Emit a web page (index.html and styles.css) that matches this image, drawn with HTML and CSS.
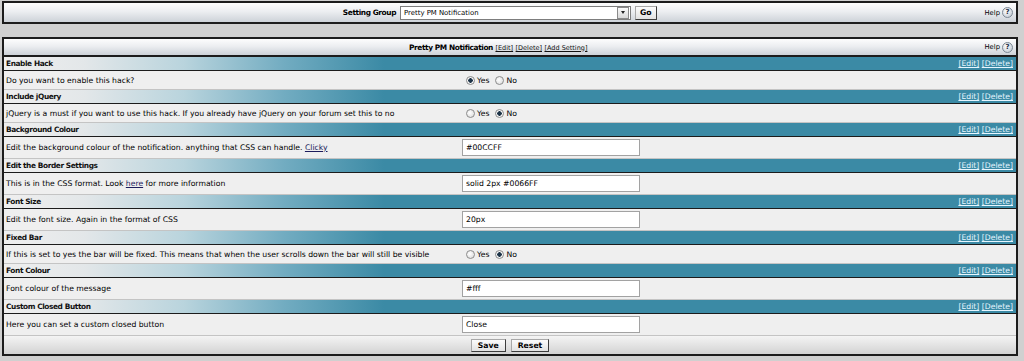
FILE: index.html
```html
<!DOCTYPE html>
<html lang="en">
<head>
    <meta charset="UTF-8">
    <title>Pretty PM Notification - Settings</title>
    <link rel="stylesheet" href="styles.css">
</head>
<body>
    <!-- Setting group chooser -->
    <div class="tborder topbar">
        <div class="topbar-group">
            <b>Setting Group</b>
            <span class="select">
                <span class="select-text">Pretty PM Notification</span>
                <span class="select-arrow"><i></i></span>
            </span>
            <button class="button button-go">Go</button>
        </div>
        <span class="help">Help <span class="help-icon">?</span></span>
    </div>

    <!-- Settings table -->
    <div class="tborder settings">
        <div class="thead">
            <div class="thead-title">
                <b>Pretty PM Notification</b>
                <a href="#">[Edit]</a> <a href="#">[Delete]</a> <a href="#">[Add Setting]</a>
            </div>
            <span class="help">Help <span class="help-icon">?</span></span>
        </div>

        <div class="tcat"><b>Enable Hack</b><span class="tcat-links"><a href="#">[Edit]</a> <a href="#">[Delete]</a></span></div>
        <div class="alt1 radio-row">
            <div class="desc">Do you want to enable this hack?</div>
            <div class="control">
                <label><input type="radio" name="enable" checked> Yes</label>
                <label><input type="radio" name="enable"> No</label>
            </div>
        </div>

        <div class="tcat"><b>Include jQuery</b><span class="tcat-links"><a href="#">[Edit]</a> <a href="#">[Delete]</a></span></div>
        <div class="alt1 radio-row">
            <div class="desc">jQuery is a must if you want to use this hack. If you already have jQuery on your forum set this to no</div>
            <div class="control">
                <label><input type="radio" name="jquery"> Yes</label>
                <label><input type="radio" name="jquery" checked> No</label>
            </div>
        </div>

        <div class="tcat"><b>Background Colour</b><span class="tcat-links"><a href="#">[Edit]</a> <a href="#">[Delete]</a></span></div>
        <div class="alt1 input-row">
            <div class="desc">Edit the background colour of the notification. anything that CSS can handle. <a href="#">Clicky</a></div>
            <div class="control"><input class="bginput" type="text" value="#00CCFF"></div>
        </div>

        <div class="tcat"><b>Edit the Border Settings</b><span class="tcat-links"><a href="#">[Edit]</a> <a href="#">[Delete]</a></span></div>
        <div class="alt1 input-row">
            <div class="desc">This is in the CSS format. Look <a href="#">here</a> for more information</div>
            <div class="control"><input class="bginput" type="text" value="solid 2px #0066FF"></div>
        </div>

        <div class="tcat"><b>Font Size</b><span class="tcat-links"><a href="#">[Edit]</a> <a href="#">[Delete]</a></span></div>
        <div class="alt1 input-row">
            <div class="desc">Edit the font size. Again in the format of CSS</div>
            <div class="control"><input class="bginput" type="text" value="20px"></div>
        </div>

        <div class="tcat"><b>Fixed Bar</b><span class="tcat-links"><a href="#">[Edit]</a> <a href="#">[Delete]</a></span></div>
        <div class="alt1 radio-row">
            <div class="desc">If this is set to yes the bar will be fixed. This means that when the user scrolls down the bar will still be visible</div>
            <div class="control">
                <label><input type="radio" name="fixed"> Yes</label>
                <label><input type="radio" name="fixed" checked> No</label>
            </div>
        </div>

        <div class="tcat"><b>Font Colour</b><span class="tcat-links"><a href="#">[Edit]</a> <a href="#">[Delete]</a></span></div>
        <div class="alt1 input-row">
            <div class="desc">Font colour of the message</div>
            <div class="control"><input class="bginput" type="text" value="#fff"></div>
        </div>

        <div class="tcat"><b>Custom Closed Button</b><span class="tcat-links"><a href="#">[Edit]</a> <a href="#">[Delete]</a></span></div>
        <div class="alt1 input-row">
            <div class="desc">Here you can set a custom closed button</div>
            <div class="control"><input class="bginput" type="text" value="Close"></div>
        </div>

        <div class="tfoot">
            <button class="button">Save</button>
            <button class="button">Reset</button>
        </div>
    </div>
</body>
</html>
```

FILE: styles.css
```css
/* General */
body {
    margin: 0;
    padding: 1px 6px 0 2px;
    background: #d0d0d0;
    font-family: "DejaVu Sans", Verdana, sans-serif;
    font-size: 7.7px;
    color: #000;
}

a {
    color: #1c1c5c;
}

b {
    font-size: 7.4px;
    letter-spacing: -0.4px;
}

.tborder {
    border: 2px solid #1c1c1c;
}

/* Buttons */
.button {
    height: 13px;
    padding: 0 6px;
    font-family: inherit;
    font-size: 7.7px;
    font-weight: bold;
    color: #000;
    background: linear-gradient(#fcfcfc, #e2e2e2);
    border: 1px solid;
    border-color: #a8a8a8 #3c3c3c #3c3c3c #a8a8a8;
    line-height: 11px;
}

.button-go {
    height: 14px;
    padding: 0 4px;
}

/* Help link */
.help {
    display: flex;
    align-items: center;
    gap: 2px;
    padding-right: 3px;
    font-size: 6.8px;
}

.help-icon {
    display: inline-block;
    width: 9px;
    height: 9px;
    border: 1px solid #7c8894;
    border-radius: 50%;
    background: radial-gradient(circle at 40% 35%, #ffffff, #b9c3cd);
    font-size: 7px;
    font-weight: bold;
    line-height: 9px;
    text-align: center;
    color: #1d2c44;
}

/* Setting group bar */
.topbar {
    display: flex;
    align-items: center;
    height: 19px;
    background: linear-gradient(#fdfdfd, #eceef1 45%, #cdd2d8);
}

.topbar-group {
    flex: 1;
    display: flex;
    justify-content: center;
    align-items: center;
    gap: 4px;
    padding-left: 11px;
}

.select {
    display: flex;
    align-items: center;
    width: 231px;
    height: 14px;
    box-sizing: border-box;
    border: 1px solid #7d7d7d;
    background: #fff;
}

.select-text {
    flex: 1;
    padding-left: 3px;
    font-size: 6.9px;
}

.select-arrow {
    display: flex;
    justify-content: center;
    align-items: center;
    width: 10px;
    height: 10px;
    margin-right: 1px;
    border: 1px solid #8a8a8a;
    background: linear-gradient(#fafafa, #d8d8d8);
}

.select-arrow i {
    border-left: 2px solid transparent;
    border-right: 2px solid transparent;
    border-top: 3px solid #222;
}

/* Settings table */
.settings {
    margin-top: 13px;
}

.thead {
    display: flex;
    align-items: center;
    height: 16px;
    border-bottom: 2px solid #1c1c1c;
    background: linear-gradient(#fdfdfd, #eceef1 45%, #cdd2d8);
}

.thead-title {
    flex: 1;
    text-align: center;
    padding-left: 8px;
}

.thead-title a {
    font-size: 6.5px;
    color: #111;
}

.tcat {
    display: flex;
    justify-content: space-between;
    align-items: center;
    height: 13px;
    padding: 0 3px 0 2px;
    border-bottom: 1px solid #1c1c1c;
    background-color: #3b8aa5;
    background-image: linear-gradient(to right, #efefef 0, #e3e7e9 80px, #b9d4dd 180px, #72acc1 280px, #3b8aa5 380px);
}

.tcat b {
    color: #111;
}

.tcat-links a {
    color: #e6f6ff;
}

.alt1 {
    display: grid;
    grid-template-columns: 458px 1fr;
    align-items: center;
    background: #efefef;
    border-bottom: 1px solid #c4c4c4;
}

.radio-row {
    height: 18px;
}

.input-row {
    height: 21px;
}

.desc {
    padding-left: 2px;
}

.control {
    display: flex;
    align-items: center;
}

.control label {
    display: flex;
    align-items: center;
    gap: 2px;
    margin-left: 4px;
    margin-right: 2px;
}

.control input[type="radio"] {
    appearance: none;
    width: 9px;
    height: 9px;
    margin: 0;
    border: 1px solid #8c8c8c;
    border-radius: 50%;
    background: radial-gradient(circle at 40% 40%, #ffffff, #d6d6d6);
}

.control input[type="radio"]:checked {
    background: radial-gradient(circle, #1e3448 0, #1e3448 2px, #ffffff 2.5px, #d6d6d6);
}

.bginput {
    width: 178px;
    height: 17px;
    box-sizing: border-box;
    margin: 0;
    padding: 0 3px;
    border: 1px solid #a2a2a2;
    background: #fff;
    font-family: inherit;
    font-size: 7.7px;
    color: #000;
}

.tfoot {
    display: flex;
    justify-content: center;
    align-items: center;
    gap: 5px;
    height: 18px;
    background: linear-gradient(#f4f4f4, #d3d3d3);
}
```
